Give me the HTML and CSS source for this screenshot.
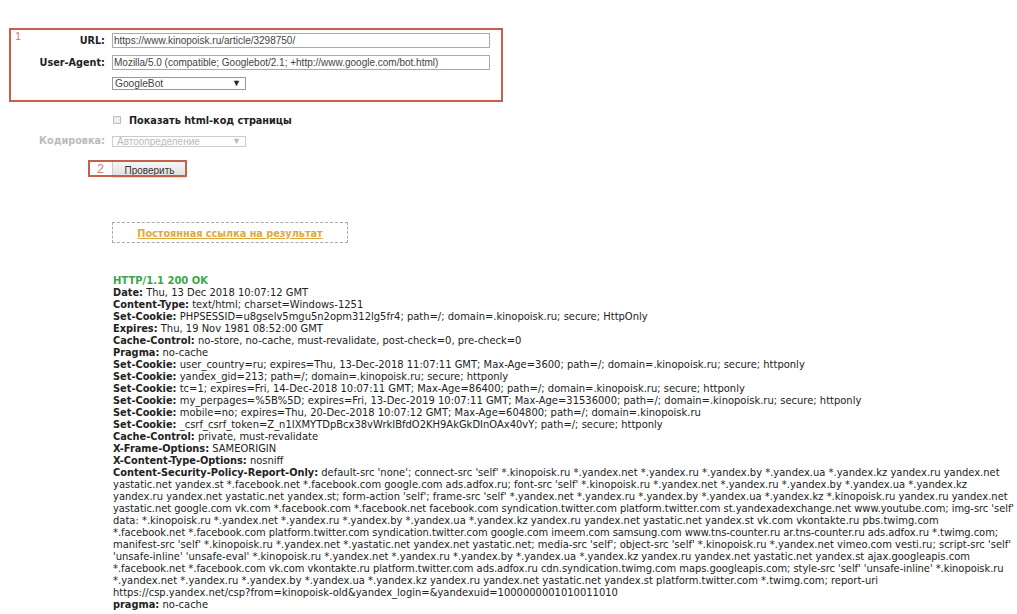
FILE: index.html
```html
<!DOCTYPE html>
<html lang="en">
<head>
    <meta charset="UTF-8">
    <meta name="viewport" content="width=device-width, initial-scale=1.0">
    <title>Проверка заголовков</title>
    <link rel="stylesheet" href="styles.css">
</head>
<body>
    <div class="mark mark-one"><span class="mark-num">1</span></div>
    <div class="mark mark-two"><span class="mark-num">2</span></div>

    <form class="check-form">
        <label class="field-label">URL:</label>
        <div class="text-input">https://www.kinopoisk.ru/article/3298750/</div>

        <label class="field-label">User-Agent:</label>
        <div class="text-input">Mozilla/5.0 (compatible; Googlebot/2.1; +http://www.google.com/bot.html)</div>

        <span></span>
        <div class="select-box">GoogleBot<span class="arrow">▼</span></div>

        <span></span>
        <div class="check-row"><span class="check-box"></span><b>Показать html-код страницы</b></div>

        <label class="field-label disabled">Кодировка:</label>
        <div class="select-box select-disabled">Автоопределение<span class="arrow">▼</span></div>

        <span></span>
        <div class="submit-button">Проверить</div>
    </form>

    <div class="permalink"><a href="#">Постоянная ссылка на результат</a></div>

    <div class="headers">
        <div class="status">HTTP/1.1 200 OK</div>
        <div><b>Date:</b> Thu, 13 Dec 2018 10:07:12 GMT</div>
        <div><b>Content-Type:</b> text/html; charset=Windows-1251</div>
        <div><b>Set-Cookie:</b> PHPSESSID=u8gselv5mgu5n2opm312lg5fr4; path=/; domain=.kinopoisk.ru; secure; HttpOnly</div>
        <div><b>Expires:</b> Thu, 19 Nov 1981 08:52:00 GMT</div>
        <div><b>Cache-Control:</b> no-store, no-cache, must-revalidate, post-check=0, pre-check=0</div>
        <div><b>Pragma:</b> no-cache</div>
        <div><b>Set-Cookie:</b> user_country=ru; expires=Thu, 13-Dec-2018 11:07:11 GMT; Max-Age=3600; path=/; domain=.kinopoisk.ru; secure; httponly</div>
        <div><b>Set-Cookie:</b> yandex_gid=213; path=/; domain=.kinopoisk.ru; secure; httponly</div>
        <div><b>Set-Cookie:</b> tc=1; expires=Fri, 14-Dec-2018 10:07:11 GMT; Max-Age=86400; path=/; domain=.kinopoisk.ru; secure; httponly</div>
        <div><b>Set-Cookie:</b> my_perpages=%5B%5D; expires=Fri, 13-Dec-2019 10:07:11 GMT; Max-Age=31536000; path=/; domain=.kinopoisk.ru; secure; httponly</div>
        <div><b>Set-Cookie:</b> mobile=no; expires=Thu, 20-Dec-2018 10:07:12 GMT; Max-Age=604800; path=/; domain=.kinopoisk.ru</div>
        <div><b>Set-Cookie:</b> _csrf_csrf_token=Z_n1IXMYTDpBcx38vWrkIBfdO2KH9AkGkDInOAx40vY; path=/; secure; httponly</div>
        <div><b>Cache-Control:</b> private, must-revalidate</div>
        <div><b>X-Frame-Options:</b> SAMEORIGIN</div>
        <div><b>X-Content-Type-Options:</b> nosniff</div>
        <div><b>Content-Security-Policy-Report-Only:</b> default-src 'none'; connect-src 'self' *.kinopoisk.ru *.yandex.net *.yandex.ru *.yandex.by *.yandex.ua *.yandex.kz yandex.ru yandex.net<br>
        yastatic.net yandex.st *.facebook.net *.facebook.com google.com ads.adfox.ru; font-src 'self' *.kinopoisk.ru *.yandex.net *.yandex.ru *.yandex.by *.yandex.ua *.yandex.kz<br>
        yandex.ru yandex.net yastatic.net yandex.st; form-action 'self'; frame-src 'self' *.yandex.net *.yandex.ru *.yandex.by *.yandex.ua *.yandex.kz *.kinopoisk.ru yandex.ru yandex.net<br>
        <span class="tight">yastatic.net google.com vk.com *.facebook.com *.facebook.net facebook.com syndication.twitter.com platform.twitter.com st.yandexadexchange.net www.youtube.com; img-src 'self'</span><br>
        data: *.kinopoisk.ru *.yandex.net *.yandex.ru *.yandex.by *.yandex.ua *.yandex.kz yandex.ru yandex.net yastatic.net yandex.st vk.com vkontakte.ru pbs.twimg.com<br>
        <span class="tight">*.facebook.net *.facebook.com platform.twitter.com syndication.twitter.com google.com imeem.com samsung.com www.tns-counter.ru ar.tns-counter.ru ads.adfox.ru *.twimg.com;</span><br>
        manifest-src 'self' *.kinopoisk.ru *.yandex.net *.yastatic.net yandex.net yastatic.net; media-src 'self'; object-src 'self' *.kinopoisk.ru *.yandex.net vimeo.com vesti.ru; script-src 'self'<br>
        'unsafe-inline' 'unsafe-eval' *.kinopoisk.ru *.yandex.net *.yandex.ru *.yandex.by *.yandex.ua *.yandex.kz yandex.ru yandex.net yastatic.net yandex.st ajax.googleapis.com<br>
        <span class="tight">*.facebook.net *.facebook.com vk.com vkontakte.ru platform.twitter.com ads.adfox.ru cdn.syndication.twimg.com maps.googleapis.com; style-src 'self' 'unsafe-inline' *.kinopoisk.ru</span><br>
        *.yandex.net *.yandex.ru *.yandex.by *.yandex.ua *.yandex.kz yandex.ru yandex.net yastatic.net yandex.st platform.twitter.com *.twimg.com; report-uri<br>
        https://csp.yandex.net/csp?from=kinopoisk-old&amp;yandex_login=&amp;yandexuid=1000000001010011010</div>
        <div><b>pragma:</b> no-cache</div>
    </div>
</body>
</html>
```

FILE: styles.css
```css
html, body {
    height: 100%;
}

body {
    margin: 0;
    background: #fff;
    color: #222;
    font-family: "DejaVu Sans", Verdana, sans-serif;
    font-size: 9.7px;
    overflow: hidden;
}

.mark {
    position: absolute;
    z-index: 1;
    box-sizing: border-box;
    border: 2px solid #c4614a;
}

.mark-one {
    left: 9px;
    top: 28px;
    width: 494px;
    height: 74px;
}

.mark-two {
    left: 88px;
    top: 160px;
    width: 99px;
    height: 17px;
}

.mark-num {
    position: absolute;
    left: 4px;
    top: 0;
    color: #c4806c;
    font-family: "Liberation Sans", Arial, sans-serif;
    font-size: 11px;
    line-height: 13px;
}

.mark-two .mark-num {
    left: 7px;
    top: 1px;
    font-size: 12.5px;
}

.check-form {
    display: grid;
    grid-template-columns: 105px 378px;
    column-gap: 7px;
    row-gap: 7px;
    align-items: center;
    padding-top: 33px;
}

.field-label {
    font-weight: bold;
    text-align: right;
    line-height: 15px;
}

.field-label.disabled {
    color: #bbb;
}

.text-input {
    box-sizing: border-box;
    height: 15px;
    padding-left: 1px;
    border: 1px solid #aaa;
    color: #444;
    font-family: "Liberation Sans", Arial, sans-serif;
    font-size: 10px;
    line-height: 13px;
    white-space: nowrap;
}

.select-box {
    box-sizing: border-box;
    display: flex;
    justify-content: space-between;
    align-items: center;
    width: 134px;
    height: 13px;
    padding: 0 4px 0 2px;
    border: 1px solid #999;
    color: #444;
    font-family: "Liberation Sans", Arial, sans-serif;
    font-size: 10.2px;
    line-height: 11px;
}

.select-disabled {
    height: 11px;
    margin-top: 1px;
    padding-left: 4px;
    border-color: #ccc;
    color: #bbb;
    font-size: 10px;
}

.arrow {
    font-size: 9px;
    color: #222;
}

.select-disabled .arrow {
    color: #bbb;
}

.check-row {
    display: flex;
    align-items: center;
    gap: 8px;
    margin-top: 17px;
    height: 12px;
    padding-left: 1px;
}

.check-box {
    box-sizing: border-box;
    width: 8px;
    height: 8px;
    border: 1px solid #bbb;
    border-radius: 1px;
    background: #eee;
}

.submit-button {
    box-sizing: border-box;
    width: 74px;
    height: 16px;
    margin-top: 7px;
    border-left: 1px solid #ccc;
    background: linear-gradient(#f6f6f6, #dcdcdc);
    color: #333;
    font-family: "Liberation Sans", Arial, sans-serif;
    font-size: 10px;
    line-height: 17px;
    text-align: center;
}

.permalink {
    box-sizing: border-box;
    width: 236px;
    height: 21px;
    margin: 44px 0 0 112px;
    border: 1px dashed #aaa;
    font-weight: bold;
    line-height: 22px;
    text-align: center;
}

.permalink a {
    color: #e0a83a;
}

.headers {
    margin: 32px 0 0 113px;
    font-size: 9.96px;
    line-height: 12px;
    white-space: nowrap;
}

.headers b {
    font-size: 9.8px;
}

.tight {
    letter-spacing: -0.06px;
}

.status {
    color: #3aa84a;
    font-weight: bold;
    font-size: 10px;
}
```
